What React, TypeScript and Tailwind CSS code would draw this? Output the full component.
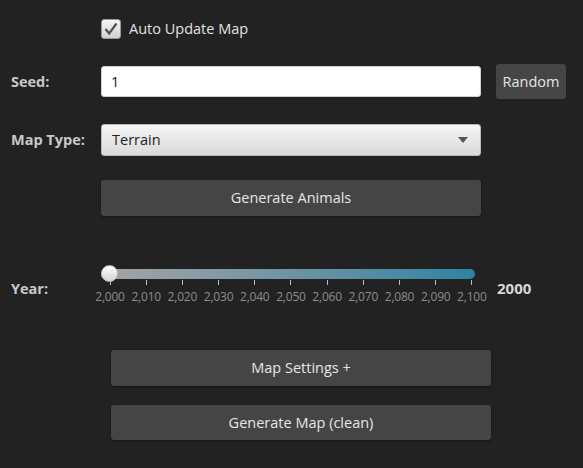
import { useState } from "react";

const ticks = ["2,000", "2,010", "2,020", "2,030", "2,040", "2,050", "2,060", "2,070", "2,080", "2,090", "2,100"];

function Checkbox({ checked, onChange }: { checked: boolean; onChange: () => void }) {
  return (
    <button
      onClick={onChange}
      className="w-5 h-5 rounded-[3px] border border-[#9a9a9a] bg-linear-to-b from-[#f4f4f4] to-[#d2d2d2] flex items-center justify-center"
    >
      {checked && (
        <svg width="16" height="16" viewBox="0 0 16 16">
          <path d="M2.5 8 L6.2 12.5 L13.5 2.5" fill="none" stroke="#505050" strokeWidth="2.2" />
        </svg>
      )}
    </button>
  );
}

export default function App() {
  const [auto, setAuto] = useState(true);
  const [seed, setSeed] = useState("1");

  return (
    <div className="w-[583px] h-[468px] bg-[#222222] font-['Open_Sans',sans-serif] text-[14.5px] text-[#e2e2e2] pt-[19px]">
      {/* auto update */}
      <div className="ml-[101px] flex items-center gap-2 h-5">
        <Checkbox checked={auto} onChange={() => setAuto(!auto)} />
        <span>Auto Update Map</span>
      </div>

      {/* seed */}
      <div className="flex items-center mt-[25px] h-[35px]">
        <label className="w-[101px] pl-[11px] font-bold text-[#c9c9c9]">Seed:</label>
        <input
          value={seed}
          onChange={(e) => setSeed(e.target.value)}
          className="w-[380px] h-[31px] rounded-[3px] bg-white border border-[#d0d0d0] px-[9px] text-[#222] outline-none"
        />
        <button className="ml-[15px] w-[70px] h-[35px] rounded-[3px] bg-[#454545] text-[#e6e6e6]">Random</button>
      </div>

      {/* map type */}
      <div className="flex items-center mt-[25px] h-[32px]">
        <label className="w-[101px] pl-[11px] font-bold text-[#c9c9c9]">Map Type:</label>
        <div className="w-[380px] h-[32px] rounded-[3px] border border-[#b8b8b8] bg-linear-to-b from-[#f6f6f6] to-[#dadada] flex items-center justify-between pl-[10px] pr-[12px] text-[#222]">
          <span>Terrain</span>
          <svg width="10" height="6" viewBox="0 0 10 6">
            <path d="M0 0 H10 L5 6 Z" fill="#555" />
          </svg>
        </div>
      </div>

      <button className="ml-[101px] mt-[24px] w-[380px] h-[36px] rounded-[3px] bg-[#454545] text-[#e6e6e6] block shadow-[0_1px_2px_rgba(0,0,0,0.5)]">
        Generate Animals
      </button>

      {/* year slider */}
      <div className="flex items-start mt-[49px] h-[40px]">
        <label className="w-[101px] pl-[11px] pt-[13px] font-bold text-[#c9c9c9]">Year:</label>
        <div className="w-[374px]">
          <div className="relative mt-[4px] h-[10px] rounded-full bg-linear-to-r from-[#a4a4a4] to-[#2a83a2]">
            <div className="absolute left-0 -top-[4px] w-[17px] h-[17px] rounded-full bg-linear-to-b from-[#ffffff] to-[#d4d4d4] border border-[#bdbdbd]" />
          </div>
          <div className="ml-[9px] w-[362px] flex justify-between mt-[1px]">
            {ticks.map((t) => (
              <div key={t} className="w-0 flex flex-col items-center">
                <div className="w-px h-[5px] bg-[#bdbdbd]" />
                <span className="mt-[5px] text-[12px] leading-[14px] text-[#8c8c8c] whitespace-nowrap tracking-[-0.2px]">{t}</span>
              </div>
            ))}
          </div>
        </div>
        <span className="ml-[22px] pt-[12px] font-bold text-[15px] text-[#d6d6d6]">2000</span>
      </div>

      <button className="ml-[111px] mt-[45px] w-[380px] h-[36px] rounded-[3px] bg-[#454545] text-[#e6e6e6] block shadow-[0_1px_2px_rgba(0,0,0,0.5)]">
        Map Settings +
      </button>
      <button className="ml-[111px] mt-[19px] w-[380px] h-[35px] rounded-[3px] bg-[#454545] text-[#e6e6e6] block shadow-[0_1px_2px_rgba(0,0,0,0.5)]">
        Generate Map (clean)
      </button>
    </div>
  );
}
